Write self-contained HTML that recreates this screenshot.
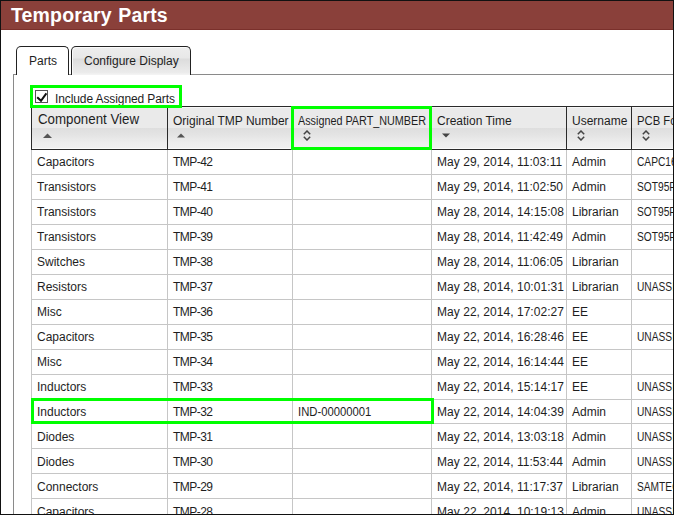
<!DOCTYPE html>
<html><head><meta charset="utf-8">
<style>
*{box-sizing:border-box;margin:0;padding:0}
html,body{width:674px;height:515px;overflow:hidden;background:#fff;font-family:"Liberation Sans",sans-serif;color:#1e1e1e}
.abs{position:absolute}
#frame{position:absolute;left:0;top:0;width:674px;height:515px;border:1px solid #111;z-index:50;pointer-events:none}
#hdr{left:1px;top:1px;width:672px;height:29px;background:#8a403a;border-bottom:1px solid #7a302b}
#title{left:11px;top:3px;font-size:19.5px;font-weight:bold;color:#fff;line-height:24px;white-space:nowrap;letter-spacing:0.15px;word-spacing:1px}
#panel{left:13px;top:74px;width:700px;height:500px;border-left:1px solid #8a8a8a;border-top:1px solid #8a8a8a}
.tab{top:46px;height:29px;border:1px solid #222;border-bottom:none;border-radius:5px 5px 0 0;font-size:12px;line-height:16px;white-space:nowrap}
#tab1{left:16px;width:53px;background:#fff;z-index:3}
#tab2{left:71px;width:120px;background:linear-gradient(#ededed 0px,#e8e8e8 11px,#dcdcdc 12px,#e4e4e4 19px,#ececec 26px,#f3f3f3 27px);box-shadow:inset 1px 1px 0 #fafafa;z-index:3}
#tab1 span{position:absolute;left:12px;top:6px}
#tab2 span{position:absolute;left:12px;top:6px}
.green{border:3px solid #00ff00;z-index:20}
#g1{left:30px;top:85px;width:152px;height:23px}
#g2{left:291px;top:106px;width:141px;height:44px}
#g3{left:31px;top:398px;width:403px;height:26px}
#cb{left:35px;top:90px;width:13px;height:13px;border:1px solid #555;background:#fff}
#cbl{left:55px;top:92px;font-size:12px;line-height:14px;white-space:nowrap;letter-spacing:-0.1px}
#tbl{left:31px;top:106px;width:700px}
table{border-collapse:separate;border-spacing:0;table-layout:fixed;font-size:12px;width:760px}
th{height:44px;border-top:1px solid #2a2a2a;border-bottom:1px solid #2a2a2a;border-left:1px solid #2a2a2a;text-align:left;font-weight:normal;vertical-align:top;padding:7px 0 0 5px;
 background:linear-gradient(#f6f6f6 0px,#f6f6f6 1px,#eaeaea 1px,#eaeaea 21px,#dedede 21px,#e4e4e4 28px,#eeeeee 36px,#f0f0f0 41px,#fbfbfb 41px,#fbfbfb 42px);position:relative;white-space:nowrap;line-height:14px}

td{height:25px;border-bottom:1px solid #c6c6c6;border-left:1px solid #c6c6c6;padding:0 0 0 5px;white-space:nowrap;overflow:hidden;line-height:24px}
.icon{position:absolute}
.cv{display:inline-block;transform:scaleX(.95);transform-origin:0 50%}
td:nth-child(2){letter-spacing:-0.55px}
td:nth-child(4){letter-spacing:0.04px}
.lo td{line-height:22px;padding-top:2px}
.r24 td{height:24px;line-height:22px;padding-top:1px}
.n{display:inline-block;transform:scaleX(.85);transform-origin:0 50%}
.c9{display:inline-block;transform:scaleX(.9);transform-origin:0 50%}
.c93{display:inline-block;transform:scaleX(.94);transform-origin:0 50%}
</style></head><body>
<div id="frame"></div>
<div id="hdr" class="abs"></div>
<div id="title" class="abs">Temporary Parts</div>
<div id="panel" class="abs"></div>
<div id="tab1" class="abs tab"><span>Parts</span></div>
<div id="tab2" class="abs tab"><span>Configure Display</span></div>
<div id="g1" class="abs green"></div>
<div id="cb" class="abs"><svg width="11" height="11" style="position:absolute;left:0;top:0"><path d="M1.2 6.2 L5 9.8 L10.4 2.4" stroke="#111" stroke-width="2" fill="none"/></svg></div>
<div id="cbl" class="abs">Include Assigned Parts</div>
<div id="g2" class="abs green"></div>
<div id="g3" class="abs green"></div>
<div id="tbl" class="abs">
<table>
<colgroup><col style="width:136px"><col style="width:125px"><col style="width:139px"><col style="width:135px"><col style="width:65px"><col style="width:160px"></colgroup>
<tr>
<th style="font-size:14px;padding-top:5px;padding-left:6px"><span class="cv">Component View</span><svg class="icon" width="9" height="5" style="left:11px;top:26px"><path d="M0 5 L4.5 0.5 L9 5Z" fill="#555"/></svg></th>
<th>Original TMP Number<svg class="icon" width="8" height="5" style="left:9px;top:26px"><path d="M0 4.5 L4 0.5 L8 4.5Z" fill="#555"/></svg></th>
<th><span class="c9">Assigned PART_NUMBER</span><svg class="icon" width="8" height="11" style="left:10px;top:23px"><path d="M0.8 4.2 L4 1 L7.2 4.2 M0.8 6.8 L4 10 L7.2 6.8" stroke="#444" stroke-width="1.5" fill="none"/></svg></th>
<th>Creation Time<svg class="icon" width="8" height="5" style="left:10px;top:26px"><path d="M0 0.5 L4 4.5 L8 0.5Z" fill="#444"/></svg></th>
<th>Username<svg class="icon" width="8" height="11" style="left:10px;top:23px"><path d="M0.8 4.2 L4 1 L7.2 4.2 M0.8 6.8 L4 10 L7.2 6.8" stroke="#444" stroke-width="1.5" fill="none"/></svg></th>
<th><span class="c93">PCB Footprint</span><svg class="icon" width="8" height="11" style="left:10px;top:23px"><path d="M0.8 4.2 L4 1 L7.2 4.2 M0.8 6.8 L4 10 L7.2 6.8" stroke="#444" stroke-width="1.5" fill="none"/></svg></th>
</tr>
<tr><td>Capacitors</td><td>TMP-42</td><td></td><td>May 29, 2014, 11:03:11</td><td>Admin</td><td><span class="n">CAPC1608X80</span></td></tr>
<tr><td>Transistors</td><td>TMP-41</td><td></td><td>May 29, 2014, 11:02:50</td><td>Admin</td><td><span class="n">SOT95P280</span></td></tr>
<tr><td>Transistors</td><td>TMP-40</td><td></td><td>May 28, 2014, 14:15:08</td><td>Librarian</td><td><span class="n">SOT95P280</span></td></tr>
<tr><td>Transistors</td><td>TMP-39</td><td></td><td>May 28, 2014, 11:42:49</td><td>Admin</td><td><span class="n">SOT95P280</span></td></tr>
<tr><td>Switches</td><td>TMP-38</td><td></td><td>May 28, 2014, 11:06:05</td><td>Librarian</td><td></td></tr>
<tr><td>Resistors</td><td>TMP-37</td><td></td><td>May 28, 2014, 10:01:31</td><td>Librarian</td><td><span class="n">UNASSIGNED</span></td></tr>
<tr><td>Misc</td><td>TMP-36</td><td></td><td>May 22, 2014, 17:02:27</td><td>EE</td><td></td></tr>
<tr><td>Capacitors</td><td>TMP-35</td><td></td><td>May 22, 2014, 16:28:46</td><td>EE</td><td><span class="n">UNASSIGNED</span></td></tr>
<tr><td>Misc</td><td>TMP-34</td><td></td><td>May 22, 2014, 16:14:44</td><td>EE</td><td></td></tr>
<tr><td>Inductors</td><td>TMP-33</td><td></td><td>May 22, 2014, 15:14:17</td><td>EE</td><td><span class="n">UNASSIGNED</span></td></tr>
<tr class="r24"><td>Inductors</td><td>TMP-32</td><td><span class="c93">IND-00000001</span></td><td>May 22, 2014, 14:04:39</td><td>Admin</td><td><span class="n">UNASSIGNED</span></td></tr>
<tr class="lo"><td>Diodes</td><td>TMP-31</td><td></td><td>May 22, 2014, 13:03:18</td><td>Admin</td><td><span class="n">UNASSIGNED</span></td></tr>
<tr class="lo"><td>Diodes</td><td>TMP-30</td><td></td><td>May 22, 2014, 11:53:44</td><td>Admin</td><td><span class="n">UNASSIGNED</span></td></tr>
<tr class="lo"><td>Connectors</td><td>TMP-29</td><td></td><td>May 22, 2014, 11:17:37</td><td>Librarian</td><td><span class="n">SAMTEC</span></td></tr>
<tr class="lo"><td>Capacitors</td><td>TMP-28</td><td></td><td>May 22, 2014, 10:19:13</td><td>Admin</td><td><span class="n">UNASSIGNED</span></td></tr>
</table>
</div>
</body></html>
